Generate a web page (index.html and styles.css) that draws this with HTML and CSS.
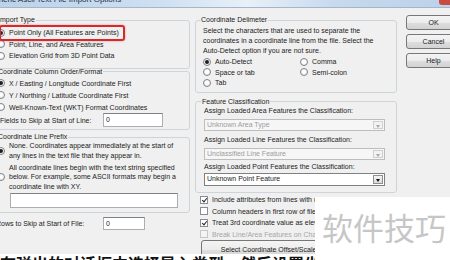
FILE: index.html
```html
<!DOCTYPE html>
<html lang="en">
<head>
    <meta charset="UTF-8">
    <title>Generic ASCII Text File Import Options</title>
    <link rel="stylesheet" href="styles.css">
</head>
<body>
    <div class="titlebar">
        <span class="title">Generic Ascii Text File Import Options</span>
        <span class="close"></span>
    </div>

    <div class="dialog">
        <!-- left column -->
        <div class="col-left">
            <fieldset class="group g-type">
                <legend>Import Type</legend>
                <div class="opt"><span class="radio on"></span>Point Only (All Features are Points)</div>
                <div class="opt"><span class="radio"></span>Point, Line, and Area Features</div>
                <div class="opt"><span class="radio"></span>Elevation Grid from 3D Point Data</div>
            </fieldset>

            <fieldset class="group g-order">
                <legend>Coordinate Column Order/Format</legend>
                <div class="opt tall"><span class="radio on"></span>X / Easting / Longitude Coordinate First</div>
                <div class="opt tall"><span class="radio"></span>Y / Northing / Latitude Coordinate First</div>
                <div class="opt tall"><span class="radio"></span>Well-Known-Text (WKT) Format Coordinates</div>
                <div class="field-row">
                    <span class="skip-label">Fields to Skip at Start of Line:</span>
                    <span class="textbox fields">0</span>
                </div>
            </fieldset>

            <fieldset class="group g-prefix">
                <legend>Coordinate Line Prefix</legend>
                <div class="opt multi"><span class="radio on"></span><span>None. Coordinates appear immediately at the start of<br>any lines in the text file that they appear in.</span></div>
                <div class="opt multi second"><span class="radio"></span><span>All coordinate lines begin with the text string specified<br>below. For example, some ASCII formats may begin a<br>coordinate line with XY.</span></div>
                <span class="textbox prefix"></span>
            </fieldset>

            <div class="rows-row">
                <span class="rows-label">Rows to Skip at Start of File:</span>
                <span class="textbox rows">0</span>
            </div>
        </div>

        <!-- middle column -->
        <div class="col-mid">
            <fieldset class="group g-delim">
                <legend>Coordinate Delimeter</legend>
                <div class="delim-text">Select the characters that are used to separate the<br>coordinates in a coordinate line from the file. Select the<br>Auto-Detect option if you are not sure.</div>
                <div class="delim-grid">
                    <div class="opt"><span class="radio on"></span>Auto-Detect</div>
                    <div class="opt"><span class="radio"></span>Space or tab</div>
                    <div class="opt"><span class="radio"></span>Tab</div>
                    <div class="opt"><span class="radio"></span>Comma</div>
                    <div class="opt"><span class="radio"></span>Semi-colon</div>
                </div>
            </fieldset>

            <fieldset class="group g-feature">
                <legend>Feature Classification</legend>
                <div class="flabel">Assign Loaded Area Features the Classification:</div>
                <div class="combo disabled"><span class="combo-text">Unknown Area Type</span><span class="arrow"></span></div>
                <div class="flabel second">Assign Loaded Line Features the Classification:</div>
                <div class="combo disabled"><span class="combo-text">Unclassified Line Feature</span><span class="arrow"></span></div>
                <div class="flabel third">Assign Loaded Point Features the Classification:</div>
                <div class="combo active"><span class="combo-text">Unknown Point Feature</span><span class="arrow"></span></div>
            </fieldset>

            <div class="checks">
                <div class="opt"><span class="check on"></span>Include attributes from lines with no coordinates</div>
                <div class="opt"><span class="check"></span>Column headers in first row of file</div>
                <div class="opt"><span class="check on"></span>Treat 3rd coordinate value as elevation</div>
                <div class="opt off"><span class="check"></span>Break Line/Area Features on Changes in Attribute Values</div>
            </div>

            <button class="btn offset">Select Coordinate Offset/Scale...</button>
        </div>

        <!-- right column -->
        <div class="col-btns">
            <button class="btn side">OK</button>
            <button class="btn side">Cancel</button>
            <button class="btn side">Help</button>
        </div>
    </div>

    <div class="article">
        <span>在弹出的对话框中选择导入类型，然后设置坐标列的顺序与格式，再点击确定按钮完成文本文件的导入。</span>
    </div>

    <div class="highlight"></div>
    <div class="watermark">软件技巧</div>
</body>
</html>
```

FILE: styles.css
```css
body {
    margin: 0;
    width: 450px;
    height: 260px;
    overflow: hidden;
    position: relative;
    background: #f0f0f0;
    font-family: "Liberation Sans", Arial, sans-serif;
    font-size: 7px;
    color: #1b1b1b;
}

/* title bar, mostly cropped away */
.titlebar {
    height: 7px;
    display: flex;
    overflow: hidden;
    border-bottom: 1px solid #a3b6cb;
    background: linear-gradient(90deg, #bcd2ea 0%, #cddff1 35%, #e8f0f8 55%, #c6d9ed 75%, #bcd2ea 100%);
}
.title {
    font-size: 8px;
    line-height: 8px;
    margin-top: -4px;
    margin-left: -12px;
    color: #1e2f45;
    white-space: nowrap;
}
.close {
    margin-left: auto;
    margin-right: -3px;
    width: 14px;
    height: 5px;
    background: #c84a40;
    border-radius: 0 0 3px 3px;
}

.dialog {
    display: flex;
    height: 246px;
    overflow: hidden;
    margin-left: -9px;
}
.col-left {
    width: 199px;
    flex: none;
    padding-top: 9px;
}
.col-mid {
    width: 202px;
    flex: none;
    margin-left: 5px;
    padding-top: 9px;
}
.col-btns {
    flex: none;
    margin-left: 9px;
    padding-top: 7px;
    display: flex;
    flex-direction: column;
    gap: 4.5px;
}

/* group boxes */
.group {
    margin: 0;
    padding: 4px 6px 6px 5px;
    border: 1px solid #cdd5da;
    border-radius: 3px;
    min-width: 0;
}
.group legend {
    padding: 0 1px;
    line-height: 6px;
}
.g-order {
    padding-top: 2.5px;
    padding-bottom: 2px;
}
.g-prefix {
    margin-top: 4px;
    padding-top: 1px;
    padding-bottom: 4px;
}
.g-delim {
    padding: 2.5px 4px 4px 7px;
}
.g-delim legend,
.g-feature legend {
    margin-left: -3px;
}
.g-feature {
    margin-top: 6px;
    padding: 1px 4px 6px 8px;
}

/* options */
.opt {
    display: flex;
    align-items: center;
    gap: 4px;
    height: 11.5px;
    white-space: nowrap;
}
.opt.tall {
    height: 12px;
}
.opt.multi {
    height: auto;
    line-height: 9.8px;
}
.opt.second {
    margin-top: 2px;
}
.opt.off {
    color: #a6a6a6;
}

.radio {
    flex: none;
    position: relative;
    box-sizing: border-box;
    width: 8px;
    height: 8px;
    border: 1px solid #7f8488;
    border-radius: 50%;
    background: radial-gradient(circle at 50% 40%, #ffffff 30%, #dedede 100%);
}
.radio.on::after {
    content: "";
    position: absolute;
    left: 1px;
    top: 1px;
    width: 4px;
    height: 4px;
    border-radius: 50%;
    background: #1f1f1f;
}

.check {
    flex: none;
    position: relative;
    box-sizing: border-box;
    width: 8px;
    height: 8px;
    border: 1px solid #8a8e92;
    background: #fff;
}
.opt.off .check {
    border-color: #c6c6c6;
    background: #f4f4f4;
}
.check.on::after {
    content: "";
    position: absolute;
    left: 2px;
    top: 0;
    width: 2px;
    height: 4px;
    border: solid #262626;
    border-width: 0 1.5px 1.5px 0;
    transform: rotate(40deg);
}

/* text boxes */
.textbox {
    display: block;
    box-sizing: border-box;
    background: #fff;
    border: 1px solid #abadb3;
    border-top-color: #7e8287;
    padding: 1px 2px;
    line-height: 10px;
}
.field-row {
    display: flex;
    align-items: center;
    height: 14px;
}
.skip-label {
    width: 106px;
    padding-left: 3px;
    flex: none;
    box-sizing: border-box;
    white-space: nowrap;
}
.textbox.fields {
    width: 60px;
    height: 14px;
}
.textbox.prefix {
    margin: 1px 0 0 13px;
    width: 168px;
    height: 15px;
}
.rows-row {
    display: flex;
    align-items: center;
    margin-top: 4px;
    height: 13px;
}
.rows-label {
    width: 112px;
    padding-left: 5px;
    box-sizing: border-box;
    flex: none;
    white-space: nowrap;
}
.textbox.rows {
    width: 42px;
    height: 13px;
}

/* delimiter */
.delim-text {
    line-height: 10.3px;
    white-space: nowrap;
}
.delim-grid {
    display: grid;
    grid-template-columns: 97px auto;
    grid-template-rows: repeat(3, 10.5px);
    grid-auto-flow: column;
}
.delim-grid .opt {
    height: 10.5px;
}

/* feature classification */
.flabel {
    line-height: 10px;
    white-space: nowrap;
}
.flabel.second {
    margin-top: 4px;
}
.flabel.third {
    margin-top: 2px;
}
.combo {
    display: flex;
    box-sizing: border-box;
    width: 181px;
    height: 12px;
    margin-top: 3px;
    border: 1px solid #bdbdbd;
    background: #f6f6f6;
    color: #9c9c9c;
}
.combo.active {
    margin-top: 1px;
    height: 13px;
    border-color: #7d8185;
    background: #fff;
    color: #1b1b1b;
}
.combo-text {
    flex: 1;
    padding-left: 2px;
    line-height: 10px;
}
.arrow {
    position: relative;
    width: 10px;
    margin: 1px;
    border: 1px solid #cfcfcf;
    box-sizing: border-box;
    background: #f2f2f2;
}
.arrow::after {
    content: "";
    position: absolute;
    left: 2px;
    top: 3px;
    border: 2px solid transparent;
    border-top: 3px solid #a8a8a8;
}
.combo.active .arrow {
    border-color: #8e8e8e;
    background: linear-gradient(#f4f4f4, #dcdcdc);
}
.combo.active .arrow::after {
    border-top-color: #111;
}

.checks {
    margin-top: 1px;
    padding-left: 5px;
}

/* buttons */
.btn {
    box-sizing: border-box;
    margin: 0;
    padding: 0;
    font: inherit;
    color: #1b1b1b;
    border: 1px solid #777;
    border-radius: 3px;
    background: linear-gradient(#f4f4f4 0%, #ececec 50%, #dedede 51%, #d2d2d2 100%);
}
.btn.side {
    width: 55px;
    height: 14.5px;
}
.btn.offset {
    display: block;
    margin: 0 0 0 6px;
    width: 141px;
    height: 20px;
}

/* page text below the screenshot */
.article {
    height: 6px;
    overflow: hidden;
    background: #fff;
    white-space: nowrap;
}
.article span {
    display: block;
    padding-top: 1px;
    font-family: "Noto Sans CJK SC", sans-serif;
    font-size: 16px;
    font-weight: bold;
    line-height: 16px;
    color: #111;
}

/* overlays */
.highlight {
    position: absolute;
    left: -1px;
    top: 25px;
    width: 126px;
    height: 16px;
    box-sizing: border-box;
    border: 2px solid #d7282e;
    border-radius: 3px;
    box-shadow: 0 0 2px rgba(200, 30, 30, 0.5);
}
.watermark {
    position: absolute;
    left: 315px;
    top: 197px;
    width: 135px;
    height: 63px;
    box-sizing: border-box;
    padding-left: 7px;
    background: #fff;
    color: #c6c6c6;
    font-family: "Noto Sans CJK SC", sans-serif;
    font-size: 31px;
    line-height: 60px;
    white-space: nowrap;
}
```
